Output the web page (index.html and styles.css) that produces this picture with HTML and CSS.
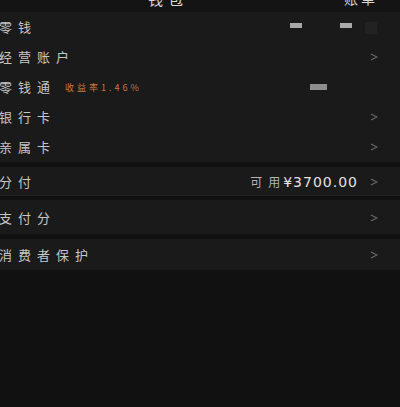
FILE: index.html
```html
<!DOCTYPE html>
<html lang="zh-CN">
<head>
  <meta charset="UTF-8" />
  <meta name="viewport" content="width=device-width, initial-scale=1.0"/>
  <title>钱包</title>
  <link rel="stylesheet" href="styles.css">
</head>
<body>
  <div class="topbar">
    <span class="title">钱包</span>
    <span class="bill">账单</span>
  </div>

  <div class="group">
    <div class="cell">
      <span class="label">零钱</span>
      <div class="masked">
        <span class="blot"></span>
        <span class="blot second"></span>
        <span class="square"></span>
      </div>
    </div>
    <div class="cell">
      <span class="label">经营账户</span>
      <svg class="arrow" viewBox="0 0 8 8"><polyline points="1,1 7,4 1,7"/></svg>
    </div>
    <div class="cell">
      <span class="label">零钱通</span>
      <span class="rate">收益率1.46%</span>
      <span class="blot wide"></span>
    </div>
    <div class="cell">
      <span class="label">银行卡</span>
      <svg class="arrow" viewBox="0 0 8 8"><polyline points="1,1 7,4 1,7"/></svg>
    </div>
    <div class="cell">
      <span class="label">亲属卡</span>
      <svg class="arrow" viewBox="0 0 8 8"><polyline points="1,1 7,4 1,7"/></svg>
    </div>
  </div>

  <div class="group fen">
    <div class="cell">
      <span class="label">分付</span>
      <span class="quota">可用<b>¥3700.00</b></span>
      <svg class="arrow" viewBox="0 0 8 8"><polyline points="1,1 7,4 1,7"/></svg>
    </div>
  </div>

  <div class="group score">
    <div class="cell">
      <span class="label">支付分</span>
      <svg class="arrow" viewBox="0 0 8 8"><polyline points="1,1 7,4 1,7"/></svg>
    </div>
  </div>

  <div class="group protect">
    <div class="cell">
      <span class="label">消费者保护</span>
      <svg class="arrow" viewBox="0 0 8 8"><polyline points="1,1 7,4 1,7"/></svg>
    </div>
  </div>
</body>
</html>
```

FILE: styles.css
```css
body {
  margin: 0;
  padding: 0;
  background: #111111;
  color: #c6c6c6;
  font-family: "Noto Sans CJK SC", "Noto Sans", sans-serif;
  height: 100vh;
  overflow: hidden;
}

.topbar {
  height: 12px;
  background: #141414;
  display: flex;
  align-items: flex-end;
  overflow: hidden;
  padding-right: 22px;
}

.title {
  margin-left: 148px;
  font-size: 15px;
  letter-spacing: 5px;
  line-height: 15px;
  margin-bottom: 6px;
  color: #d8d8d8;
}

.bill {
  margin-left: auto;
  font-size: 14px;
  letter-spacing: 3px;
  line-height: 14px;
  margin-bottom: 7px;
  color: #d8d8d8;
}

.group {
  background: #1a1a1a;
  margin-bottom: 5px;
}

.cell {
  height: 30px;
  display: flex;
  align-items: center;
  padding-right: 22px;
}

.fen {
  margin-bottom: 4px;
  border-bottom: 1px solid #222;
}

.fen .cell {
  height: 27px;
  padding-top: 1px;
}

.score .cell {
  height: 34px;
  padding-top: 2px;
  box-sizing: border-box;
}

.protect .cell {
  height: 31px;
}

.label {
  margin-left: -1px;
  font-size: 13px;
  letter-spacing: 6px;
  line-height: 16px;
}

.arrow {
  width: 8px;
  height: 8px;
  margin-left: auto;
  fill: none;
  stroke: #6a6a6a;
  stroke-width: 1.1;
}

.fen .arrow {
  margin-left: 0;
}

.masked {
  margin-left: auto;
  display: flex;
  align-items: center;
  margin-right: 1px;
}

.blot {
  display: block;
  width: 12px;
  height: 5px;
  background: #a9a9a9;
  margin-bottom: 4px;
}

.blot.second {
  margin-left: 38px;
}

.blot.wide {
  width: 17px;
  height: 6px;
  margin: 0 51px 0 auto;
  background: #8e8e8e;
}

.square {
  width: 12px;
  height: 12px;
  margin-left: 13px;
  background: #222222;
  margin-top: 2px;
}

.rate {
  margin-left: 9px;
  font-size: 9px;
  letter-spacing: 3px;
  color: #c8773e;
}

.quota {
  margin-left: auto;
  margin-right: 12px;
  font-size: 12px;
  letter-spacing: 6px;
  color: #b4b4b4;
  display: flex;
  align-items: center;
}

.quota b {
  font-family: "DejaVu Sans", sans-serif;
  font-weight: normal;
  font-size: 14px;
  letter-spacing: 1px;
  color: #e2e2e2;
  margin-left: -3px;
}
```
